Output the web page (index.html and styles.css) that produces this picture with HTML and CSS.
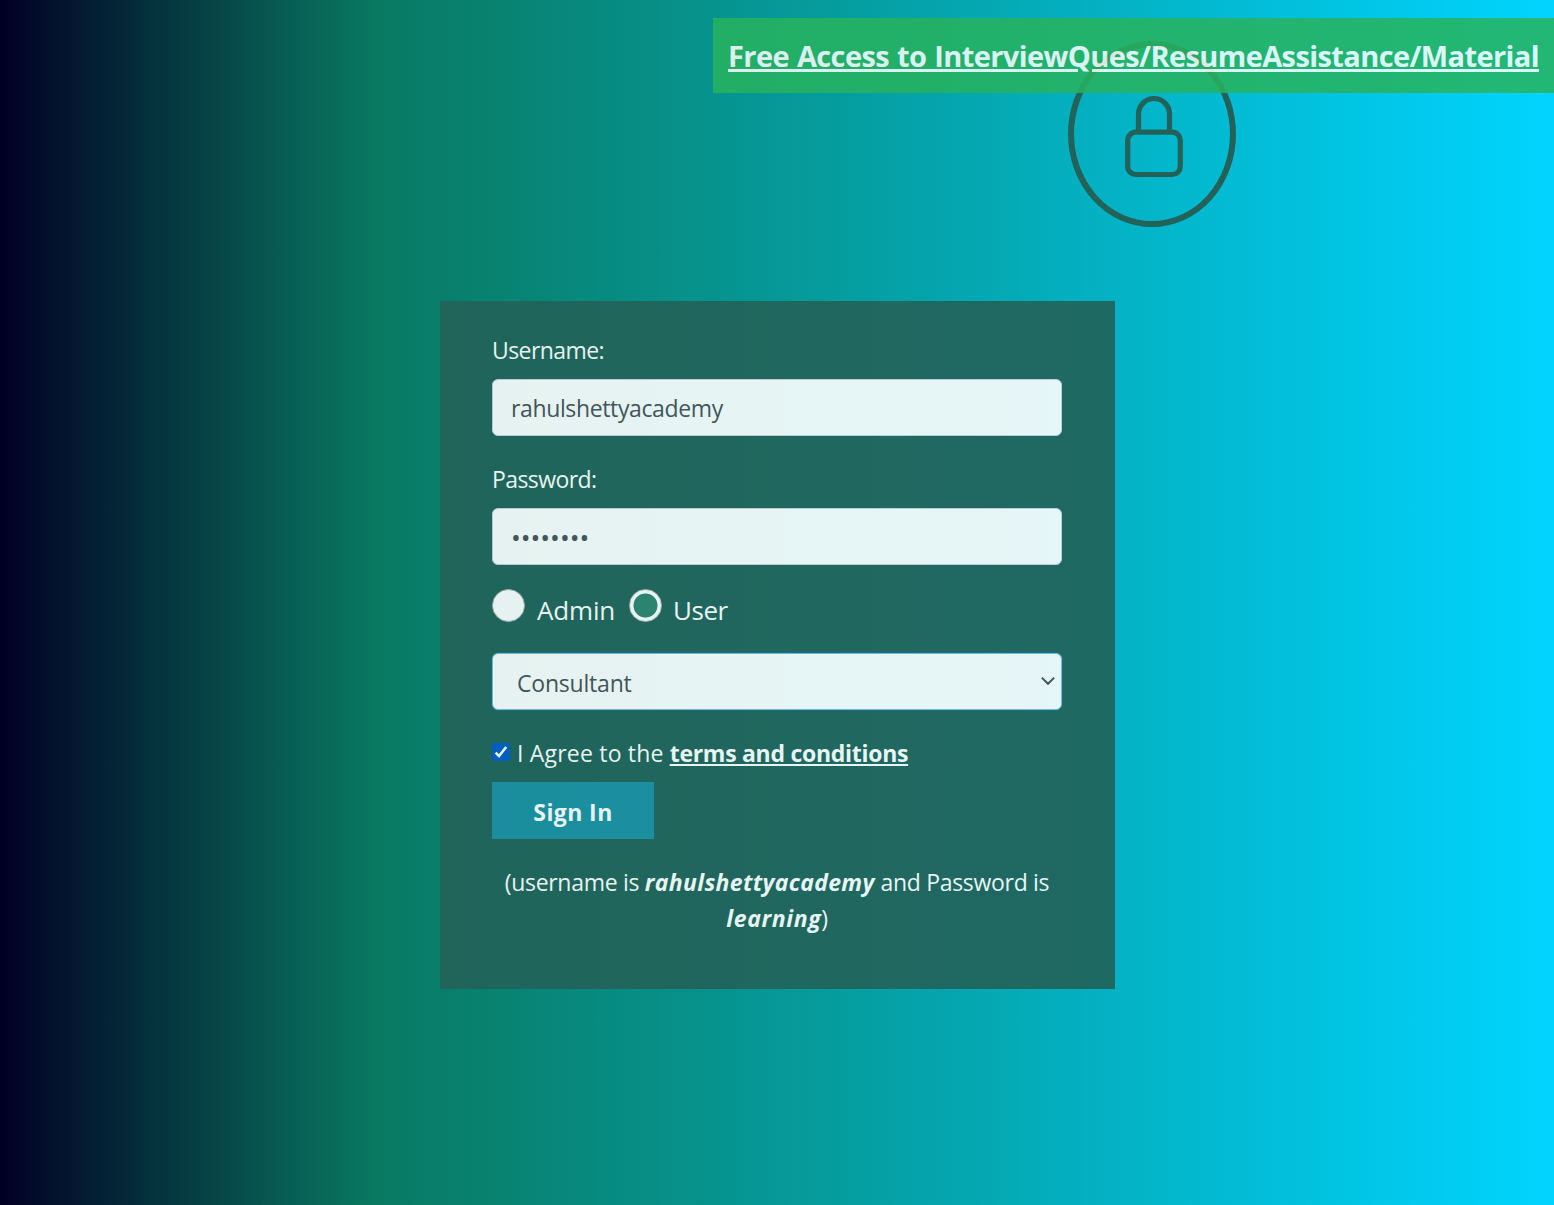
FILE: index.html
```html
<!DOCTYPE html>
<html lang="en">
<head>
<meta charset="utf-8">
<title>Login</title>
<link rel="stylesheet" href="styles.css">
</head>
<body>
<a class="banner" href="#">Free Access to InterviewQues/ResumeAssistance/Material</a>
<div class="emblem">
  <svg width="168" height="186" viewBox="0 0 168 186" fill="none" stroke="#236259">
    <ellipse cx="84" cy="93" rx="81" ry="90" stroke-width="6"/>
    <rect x="59.7" y="91.2" width="52.6" height="42.3" rx="8" stroke-width="5.2"/>
    <path d="M70.5 90V73a15.5 15.5 0 0 1 31 0V90" stroke-width="5.2"/>
  </svg>
</div>
<form class="panel">
  <div class="group">
    <label class="label" for="username">Username:</label>
    <input class="control" id="username" type="text" value="rahulshettyacademy">
  </div>
  <div class="group">
    <label class="label" for="password">Password:</label>
    <input class="control secret" id="password" type="password" value="learning">
  </div>
  <div class="radios">
    <label class="radio"><span class="circle"></span><span class="admin">Admin</span></label>
    <label class="radio"><span class="circle checked"></span><span class="user">User</span></label>
  </div>
  <div class="select">
    <span>Consultant</span>
    <svg width="16" height="10" viewBox="0 0 16 10" fill="none" stroke="#495057" stroke-width="2"><path d="M1.8 1.6 8 7.8l6.2-6.2"/></svg>
  </div>
  <div class="agree">
    <svg class="check" width="18" height="18" viewBox="0 0 18 18"><rect width="18" height="18" rx="2.5" fill="#005cc8"/><path d="M3.6 9.6 7 13l7.2-9" fill="none" stroke="#fff" stroke-width="2.6"/></svg>
    <span class="agree-text">I Agree to the</span>
    <a class="terms" href="#">terms and conditions</a>
  </div>
  <button class="submit" type="button">Sign In</button>
  <p class="hint">(username is <b>rahulshettyacademy</b> and Password is<br><b class="word">learning</b>)</p>
</form>
</body>
</html>
```

FILE: styles.css
```css
* { box-sizing: border-box; }
body {
  margin: 0;
  min-height: 1205px;
  padding-top: 41px;
  background: linear-gradient(90deg, #020024 0%, #097961 24%, #00d4ff 100%);
  color: #fff;
  font-family: "Open Sans", "Noto Sans", sans-serif;
  font-size: 23px;
  line-height: 36px;
}
.banner {
  position: absolute;
  top: 18px;
  right: 0;
  width: 841px;
  height: 75px;
  padding-left: 15px;
  line-height: 75px;
  background: #28b35e;
  opacity: .85;
  color: #fff;
  font-size: 29px;
  font-weight: 700;
  letter-spacing: -.6px;
  word-spacing: 1px;
  white-space: nowrap;
  text-decoration-thickness: 3px;
  text-underline-offset: 2px;
}
.emblem { margin-left: 1068px; height: 186px; }
.emblem svg { display: block; }
.panel {
  width: 675px;
  height: 688px;
  margin: 74px 0 0 440px;
  padding: 30px 53px 0 52px;
  background: #236259;
  opacity: .9;
}
.group { margin-bottom: 24px; }
.label { display: block; height: 36px; margin-bottom: 12px; line-height: 38px; letter-spacing: -.58px; }
.control, .select {
  display: block;
  width: 570px;
  height: 57px;
  border: 1px solid #ced4da;
  border-radius: 6px;
  background: #fff;
  color: #495057;
  font: inherit;
}
.control { padding: 0 18px; letter-spacing: -.37px; }
.secret { font-size: 26px; letter-spacing: 0; }
.radios { display: flex; gap: 14px; height: 33px; }
.radio { display: flex; gap: 12px; font-size: 26px; line-height: 43px; }
.admin { letter-spacing: -.18px; }
.user { margin-left: -1px; letter-spacing: -.5px; }
.circle { width: 33px; height: 33px; border: 1px solid #aaa; border-radius: 50%; background: #fff; }
.circle.checked { border-color: #bbb; background: radial-gradient(circle, #31826c 11.6px, #fff 12.4px); }
.select {
  display: flex;
  justify-content: space-between;
  align-items: center;
  margin-top: 31px;
  padding: 3px 5px 0 24px;
  border-color: #80b9dc;
  box-shadow: 0 0 0 1px #1f6a70;
  letter-spacing: -.2px;
}
.select svg { margin-top: -4px; }
.agree { display: flex; align-items: center; height: 36px; margin: 24px 0 12px; line-height: 38px; }
.check { margin: 0 7px 0 0; }
.agree-text { margin-top: 2px; letter-spacing: .2px; }
.terms {
  margin: 2px 0 0 6px;
  color: #fff;
  font-weight: 700;
  letter-spacing: -.28px;
  text-decoration-thickness: 2px;
  text-underline-offset: 2px;
}
.submit {
  display: block;
  width: 162px;
  height: 57px;
  padding: 2px 0 0;
  border: 0;
  background: #1e8fa3;
  color: #fff;
  font: inherit;
  font-weight: 700;
  letter-spacing: .4px;
}
.hint { margin: 25px 0 0; text-align: center; white-space: nowrap; letter-spacing: -.3px; }
.hint b { font-style: italic; letter-spacing: .33px; }
.hint .word { letter-spacing: .6px; }
```
